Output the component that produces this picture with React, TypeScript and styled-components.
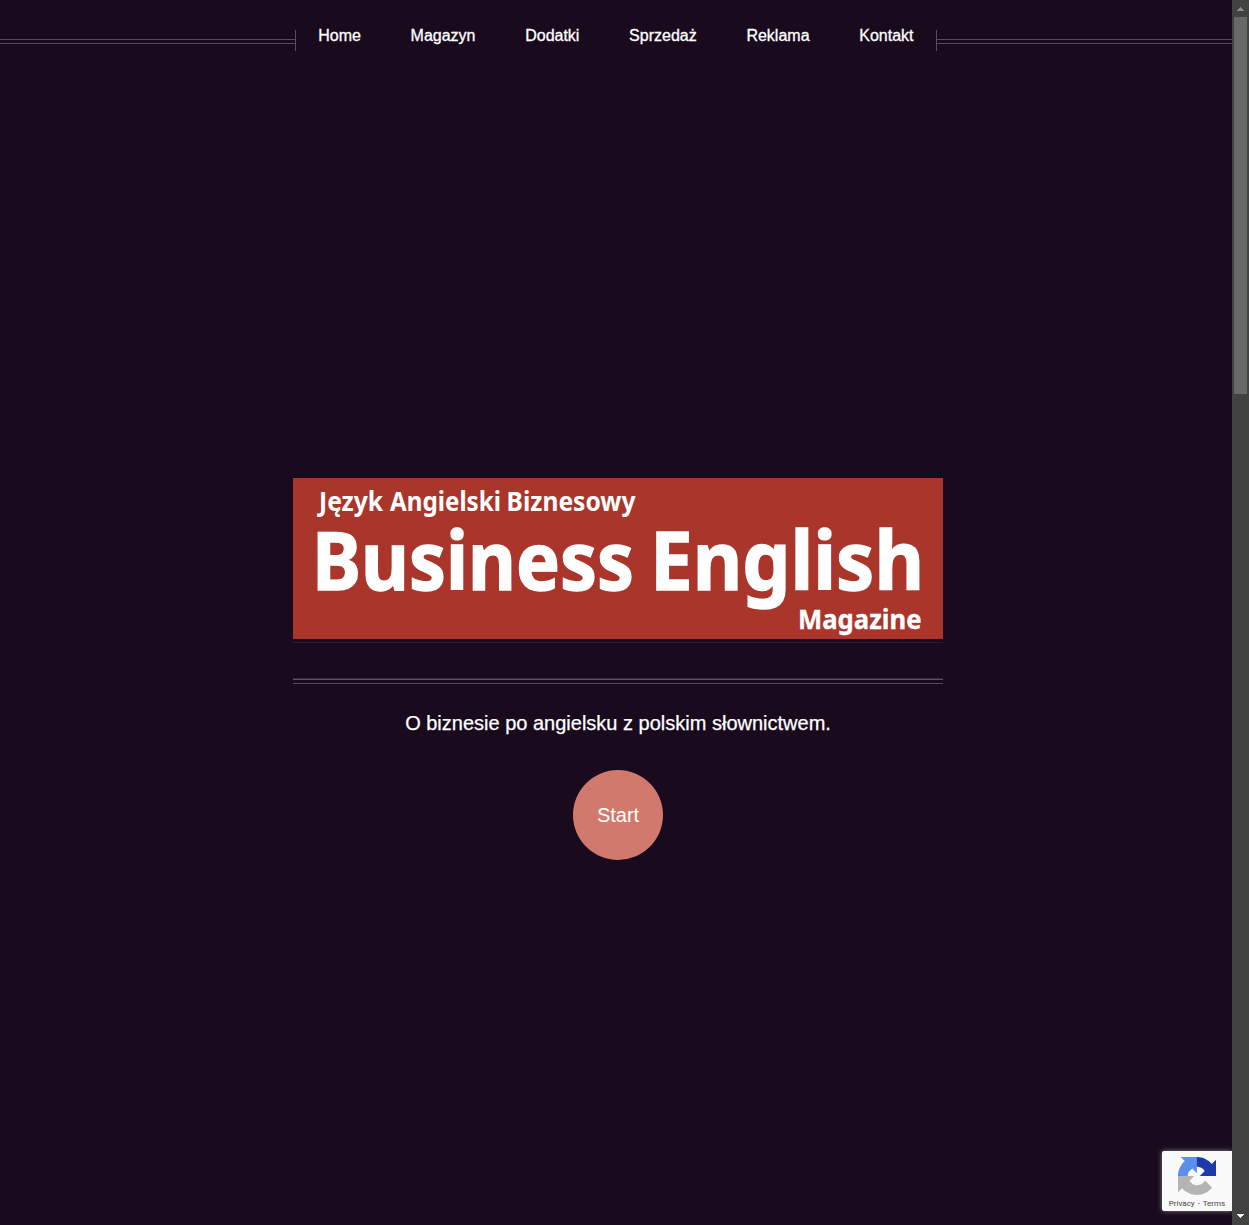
import React from "react";
import styled, { createGlobalStyle } from "styled-components";

const GlobalStyle = createGlobalStyle`
  * { box-sizing: border-box; }
  body { margin: 0; background: #1a0a1e; overflow: hidden; }
`;

const Window = styled.div`
  display: flex;
  width: 1249px;
  height: 1225px;
  overflow: hidden;
  font-family: "Liberation Sans", Arial, sans-serif;
  color: #fff;
`;

const Page = styled.div`
  position: relative;
  flex: 1;
  display: flex;
  flex-direction: column;
  background: #1a0a1e;
`;

const Header = styled.header`
  display: flex;
  height: 51px;
  padding-top: 25px;
`;

const Rule = styled.div<{ $width?: number }>`
  height: 5px;
  margin-top: 14px;
  flex: ${(p) => (p.$width ? `0 0 ${p.$width}px` : "1")};
  border: solid #584c5b;
  border-width: 1px 0;
`;

const Nav = styled.nav`
  display: flex;
  width: 640px;
  gap: 49.7px;
  padding-left: 22.2px;
  font-size: 16px;
  line-height: 21px;
  -webkit-text-stroke: 0.3px #fff;
`;

const NavEdge = styled.span`
  width: 1px;
  height: 21px;
  margin-top: 5px;
  background: #584c5b;
`;

const NavLink = styled.a`
  color: #fff;
  white-space: nowrap;
`;

const Hero = styled.main`
  display: flex;
  flex-direction: column;
  align-items: center;
  width: 650px;
  margin: 427px 0 0 293px;
`;

const Banner = styled.svg`
  display: block;
  width: 650px;
  height: 161px;
  background: #a9352b;
  font-family: "Noto Sans", "Open Sans", sans-serif;
  font-weight: 700;
  fill: #fff;
  stroke: #fff;
`;

const FaintRule = styled.div`
  width: 100%;
  height: 1px;
  margin-top: 3px;
  background: #2d1f31;
`;

const DoubleRule = styled.div`
  width: 100%;
  height: 6px;
  margin-top: 35px;
  border-top: 1px solid #35283a;
  border-bottom: 1px solid #584c5b;
  background: linear-gradient(#5d5160 1px, transparent 1px);
`;

const Tagline = styled.p`
  margin: 26px 0 0;
  font-size: 20px;
  line-height: 26px;
  white-space: nowrap;
  -webkit-text-stroke: 0.25px #fff;
`;

const StartButton = styled.a`
  display: flex;
  align-items: center;
  justify-content: center;
  width: 90px;
  height: 90px;
  margin-top: 34px;
  border-radius: 50%;
  background: #d1796c;
  font-size: 20px;
`;

const Badge = styled.aside`
  position: absolute;
  right: 0;
  bottom: 14px;
  width: 70px;
  height: 60px;
  display: flex;
  flex-direction: column;
  align-items: center;
  padding-top: 6px;
  border-radius: 2px 0 0 2px;
  background: #f9f9f9;
  box-shadow: 0 0 5px gray;
  clip-path: inset(-8px 0 -8px -8px);
`;

const BadgeText = styled.span`
  margin-top: 4px;
  font-family: Roboto, sans-serif;
  font-size: 8px;
  line-height: 10px;
  word-spacing: 1px;
  color: #444;
  white-space: nowrap;
`;

const Scrollbar = styled.div`
  display: flex;
  flex-direction: column;
  align-items: center;
  width: 17px;
  background: #424242;
`;

const ScrollButton = styled.div<{ $top: number }>`
  height: 17px;
  padding-top: ${(p) => p.$top}px;

  svg {
    display: block;
  }
`;

const Thumb = styled.div`
  width: 13px;
  height: 377px;
  margin-bottom: auto;
  background: #686868;
`;

const links = ["Home", "Magazyn", "Dodatki", "Sprzedaż", "Reklama", "Kontakt"];

const words = [
  { text: "Język", x: 26, y: 32.5, size: 26, width: 64, stroke: 0 },
  { text: "Angielski", x: 97, y: 32.5, size: 26, width: 111, stroke: 0 },
  { text: "Biznesowy", x: 213.5, y: 32.5, size: 26, width: 129, stroke: 0 },
  { text: "Business", x: 19, y: 112, size: 80, width: 322, stroke: 1.4 },
  { text: "English", x: 357, y: 112, size: 80, width: 274, stroke: 1.4 },
  { text: "Magazine", x: 505, y: 150.5, size: 26, width: 123.5, stroke: 0.3 },
];

export default function App() {
  return (
    <Window>
      <GlobalStyle />
      <Page>
        <Header>
          <Rule $width={295} />
          <NavEdge />
          <Nav>
            {links.map((l) => (
              <NavLink key={l}>{l}</NavLink>
            ))}
          </Nav>
          <NavEdge />
          <Rule />
        </Header>
        <Hero>
          <Banner viewBox="0 0 650 161">
            {words.map((w) => (
              <text
                key={w.text}
                x={w.x}
                y={w.y}
                fontSize={w.size}
                strokeWidth={w.stroke}
                textLength={w.width}
                lengthAdjust="spacingAndGlyphs"
              >
                {w.text}
              </text>
            ))}
          </Banner>
          <FaintRule />
          <DoubleRule />
          <Tagline>O biznesie po angielsku z polskim słownictwem.</Tagline>
          <StartButton>Start</StartButton>
        </Hero>
        <Badge>
          <svg width="38" height="38" viewBox="0 0 64 64">
            <path fill="#1c3aa9" d="M64 31.955l-.033-1.37V4.687l-7.16 7.16C50.948 4.674 42.033.093 32.05.093c-10.4 0-19.622 4.96-25.458 12.64l11.736 11.86a15.55 15.55 0 0 1 4.754-5.334c2.05-1.6 4.952-2.906 8.968-2.906.485 0 .86.057 1.135.163 4.976.393 9.288 3.14 11.828 7.124l-8.307 8.307L64 31.953" />
            <path fill="#5a8ff0" d="M31.862.094l-1.37.033H4.594l7.16 7.16C4.58 13.147 0 22.06 0 32.046c0 10.4 4.96 19.622 12.64 25.458L24.5 45.768a15.55 15.55 0 0 1-5.334-4.754c-1.6-2.05-2.906-4.952-2.906-8.968 0-.485.057-.86.163-1.135.393-4.976 3.14-9.288 7.124-11.828l8.307 8.307L31.86.095" />
            <path fill="#b4b4b4" d="M.001 32.045l.033 1.37v25.898l7.16-7.16c5.86 7.173 14.774 11.754 24.76 11.754 10.4 0 19.622-4.96 25.458-12.64l-11.736-11.86a15.55 15.55 0 0 1-4.754 5.334c-2.05 1.6-4.952 2.906-8.968 2.906-.485 0-.86-.057-1.135-.163-4.976-.393-9.288-3.14-11.828-7.124l8.307-8.307L.001 32.047" />
          </svg>
          <BadgeText>Privacy - Terms</BadgeText>
        </Badge>
      </Page>
      <Scrollbar>
        <ScrollButton $top={7}>
          <svg width="7" height="4" viewBox="0 0 7 4" shapeRendering="crispEdges">
            <path fill="#8b8b8b" d="M3 0h1v1h1v1h1v1h1v1H0V3h1V2h1V1h1z" />
          </svg>
        </ScrollButton>
        <Thumb />
        <ScrollButton $top={6}>
          <svg width="7" height="4" viewBox="0 0 7 4" shapeRendering="crispEdges">
            <path fill="#fff" d="M0 0h7v1H6v1H5v1H4v1H3V3H2V2H1V1H0z" />
          </svg>
        </ScrollButton>
      </Scrollbar>
    </Window>
  );
}
